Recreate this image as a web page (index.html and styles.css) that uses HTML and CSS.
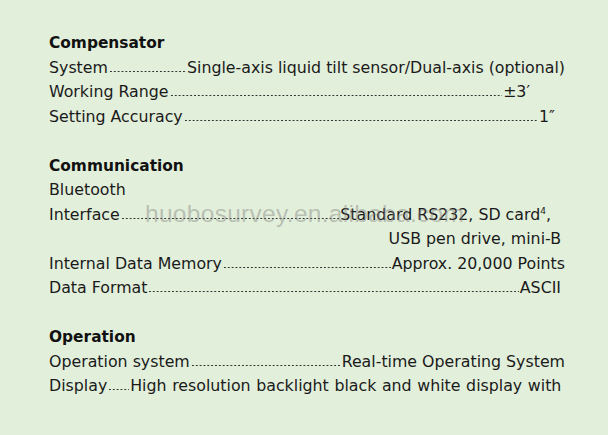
FILE: index.html
```html
<!DOCTYPE html>
<html>
<head>
<meta charset="utf-8">
<link rel="stylesheet" href="styles.css">
</head>
<body>
<div class="page">
  <div class="sheet">
    <div class="head">Compensator</div>
    <div class="row"><span>System</span><span class="lead"></span><span>Single-axis liquid tilt sensor/Dual-axis (optional)</span></div>
    <div class="row r35"><span>Working Range</span><span class="lead"></span><span>±3′</span></div>
    <div class="row r10"><span>Setting Accuracy</span><span class="lead"></span><span>1″</span></div>
    <div class="blank"></div>
    <div class="head">Communication</div>
    <div class="row"><span>Bluetooth</span></div>
    <div class="row r14"><span>Interface</span><span class="lead"></span><span>Standard RS232, SD card<sup>4</sup>,</span></div>
    <div class="row r4 right"><span>USB pen drive, mini-B</span></div>
    <div class="row"><span>Internal Data Memory</span><span class="lead"></span><span>Approx. 20,000 Points</span></div>
    <div class="row r4"><span>Data Format</span><span class="lead"></span><span>ASCII</span></div>
    <div class="blank"></div>
    <div class="head">Operation</div>
    <div class="row"><span>Operation system</span><span class="lead"></span><span>Real-time Operating System</span></div>
    <div class="row"><span>Display</span><span class="lead short"></span><span class="wide">High resolution backlight black and white display with</span></div>
    <div class="watermark">huobosurvey.en.alibaba.com</div>
  </div>
</div>
</body>
</html>
```

FILE: styles.css
```css
html, body {
  margin: 0;
  padding: 0;
  background: #e2efda;
}
.page {
  width: 608px;
  height: 435px;
  overflow: hidden;
  background: #e2efda;
}
.sheet {
  position: relative;
  padding: 31px 0 0 49px;
  width: 516px;
  font-family: "DejaVu Sans", Verdana, sans-serif;
  font-size: 15.8px;
  line-height: 24.5px;
  color: #1a1a1a;
}
.head {
  font-weight: bold;
  font-size: 15.4px;
  color: #111;
}
.blank { height: 24.5px; }
.row {
  display: flex;
  align-items: baseline;
  white-space: nowrap;
}
.row.right { justify-content: flex-end; }
.row.r35 { padding-right: 35px; }
.row.r14 { padding-right: 14px; }
.row.r10 { padding-right: 10px; }
.row.r4 { padding-right: 4px; }
.lead {
  flex: 1;
  height: 3px;
  margin: 0 1px;
  background-image: radial-gradient(circle, #333 0.75px, transparent 1.1px);
  background-size: 3.85px 3px;
  background-repeat: repeat-x;
  background-position: left bottom;
}
.lead.short { flex: 0 0 21px; }
.wide { word-spacing: 0.6px; }
sup {
  font-size: 9px;
  line-height: 0;
  vertical-align: 6px;
}
.watermark {
  position: absolute;
  left: 145px;
  top: 199px;
  font-family: "Liberation Sans", Arial, sans-serif;
  font-size: 24.5px;
  line-height: 30px;
  color: rgba(130, 130, 130, 0.45);
  letter-spacing: 0.3px;
}
```
